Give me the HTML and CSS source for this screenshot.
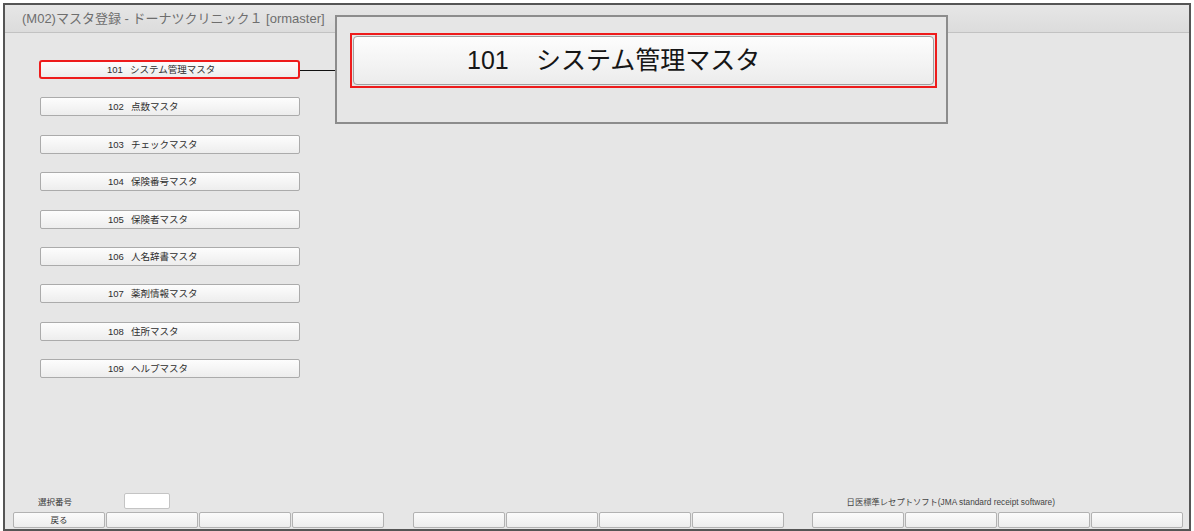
FILE: index.html
```html
<!DOCTYPE html>
<html lang="ja">
<head>
<meta charset="utf-8">
<title>(M02)マスタ登録</title>
<link rel="stylesheet" href="styles.css">
</head>
<body>
<div class="window">
  <div class="titlebar">(M02)マスタ登録 - ドーナツクリニック１ [ormaster]</div>
  <div class="content">
    <div class="menu">
      <div class="mbtn selected"><span class="num">101</span><span class="lbl">システム管理マスタ</span></div>
      <div class="mbtn"><span class="num">102</span><span class="lbl">点数マスタ</span></div>
      <div class="mbtn"><span class="num">103</span><span class="lbl">チェックマスタ</span></div>
      <div class="mbtn"><span class="num">104</span><span class="lbl">保険番号マスタ</span></div>
      <div class="mbtn"><span class="num">105</span><span class="lbl">保険者マスタ</span></div>
      <div class="mbtn"><span class="num">106</span><span class="lbl">人名辞書マスタ</span></div>
      <div class="mbtn"><span class="num">107</span><span class="lbl">薬剤情報マスタ</span></div>
      <div class="mbtn"><span class="num">108</span><span class="lbl">住所マスタ</span></div>
      <div class="mbtn"><span class="num">109</span><span class="lbl">ヘルプマスタ</span></div>
    </div>
    <div class="inputrow">
      <span class="sel-label">選択番号</span>
      <span class="sel-input"></span>
      <span class="jma">日医標準レセプトソフト(JMA standard receipt software)</span>
    </div>
    <div class="fkeys">
      <div class="fgroup">
        <div class="fbtn">戻る</div><div class="fbtn"></div><div class="fbtn"></div><div class="fbtn"></div>
      </div>
      <div class="fgroup">
        <div class="fbtn"></div><div class="fbtn"></div><div class="fbtn"></div><div class="fbtn"></div>
      </div>
      <div class="fgroup">
        <div class="fbtn"></div><div class="fbtn"></div><div class="fbtn"></div><div class="fbtn"></div>
      </div>
    </div>
  </div>
  <div class="connector"></div>
  <div class="callout">
    <div class="bigframe">
      <div class="bigbtn"><span class="num">101</span><span class="lbl">システム管理マスタ</span></div>
    </div>
  </div>
</div>
</body>
</html>
```

FILE: styles.css
```css
html, body {
  margin: 0;
  padding: 0;
  background: #ffffff;
}
body {
  font-family: "Liberation Sans", "Noto Sans CJK JP", sans-serif;
  color: #333;
}
.window {
  position: relative;
  margin: 3px 3px 0 3px;
  height: 524px;
  border: 2px solid #555;
  display: flex;
  flex-direction: column;
  background: #e6e6e6;
}
.titlebar {
  height: 27px;
  line-height: 27px;
  padding-left: 17px;
  font-size: 13px;
  color: #6e6e6e;
  background: linear-gradient(#e6e6e6, #dcdcdc);
  border-bottom: 1px solid #c2c2c2;
  white-space: nowrap;
}
.content {
  flex: 1;
  display: flex;
  flex-direction: column;
  background: #e6e6e6;
}
.menu {
  flex: 1;
  display: flex;
  flex-direction: column;
  gap: 18.4px;
  padding: 27px 0 0 35px;
}
.mbtn {
  box-sizing: border-box;
  width: 260px;
  height: 19px;
  border: 1px solid #ababab;
  border-radius: 2px;
  background: linear-gradient(#fdfdfd, #ededed);
  font-size: 9.5px;
  line-height: 17px;
  padding-left: 67px;
  color: #2e2e2e;
  white-space: nowrap;
}
.mbtn .num {
  display: inline-block;
  width: 23px;
}
.mbtn.selected {
  border: 2px solid #ee1c1c;
  border-radius: 3px;
  line-height: 15px;
  padding-left: 66px;
  width: 261px;
  margin-left: -1px;
}
.inputrow {
  display: flex;
  align-items: center;
  height: 16px;
  padding-left: 33px;
  margin-bottom: 3px;
}
.sel-label {
  width: 86px;
  font-size: 8.5px;
  color: #333;
}
.sel-input {
  box-sizing: border-box;
  width: 46px;
  height: 16px;
  background: #fff;
  border: 1px solid #c4c4c4;
  border-radius: 2px;
}
.jma {
  margin-left: auto;
  margin-right: 134px;
  font-size: 8.3px;
  color: #444;
  white-space: nowrap;
}
.fkeys {
  display: flex;
  gap: 28.5px;
  padding-left: 8px;
  margin-bottom: 1px;
}
.fgroup {
  display: flex;
  gap: 1px;
}
.fbtn {
  box-sizing: border-box;
  width: 92px;
  height: 16px;
  border: 1px solid #b2b2b2;
  border-radius: 2px;
  background: linear-gradient(#fbfbfb, #ededed);
  font-size: 8.5px;
  line-height: 14px;
  text-align: center;
  color: #333;
}
.connector {
  position: absolute;
  left: 295px;
  top: 65px;
  width: 35px;
  height: 1px;
  background: #111;
}
.callout {
  position: absolute;
  left: 330px;
  top: 10px;
  box-sizing: border-box;
  width: 613px;
  height: 109px;
  border: 2px solid #8c8c8c;
  background: #e6e6e6;
  padding: 16px 0 0 13px;
}
.bigframe {
  box-sizing: border-box;
  width: 587px;
  height: 55px;
  border: 2px solid #ee1c1c;
  padding: 1px;
}
.bigbtn {
  box-sizing: border-box;
  height: 100%;
  border: 1px solid #a0a0a0;
  border-radius: 4px;
  background: linear-gradient(#fdfdfd, #ececec);
  font-size: 25px;
  line-height: 47px;
  padding-left: 113px;
  color: #161616;
  white-space: nowrap;
}
.bigbtn .num {
  display: inline-block;
  width: 69px;
}
```
